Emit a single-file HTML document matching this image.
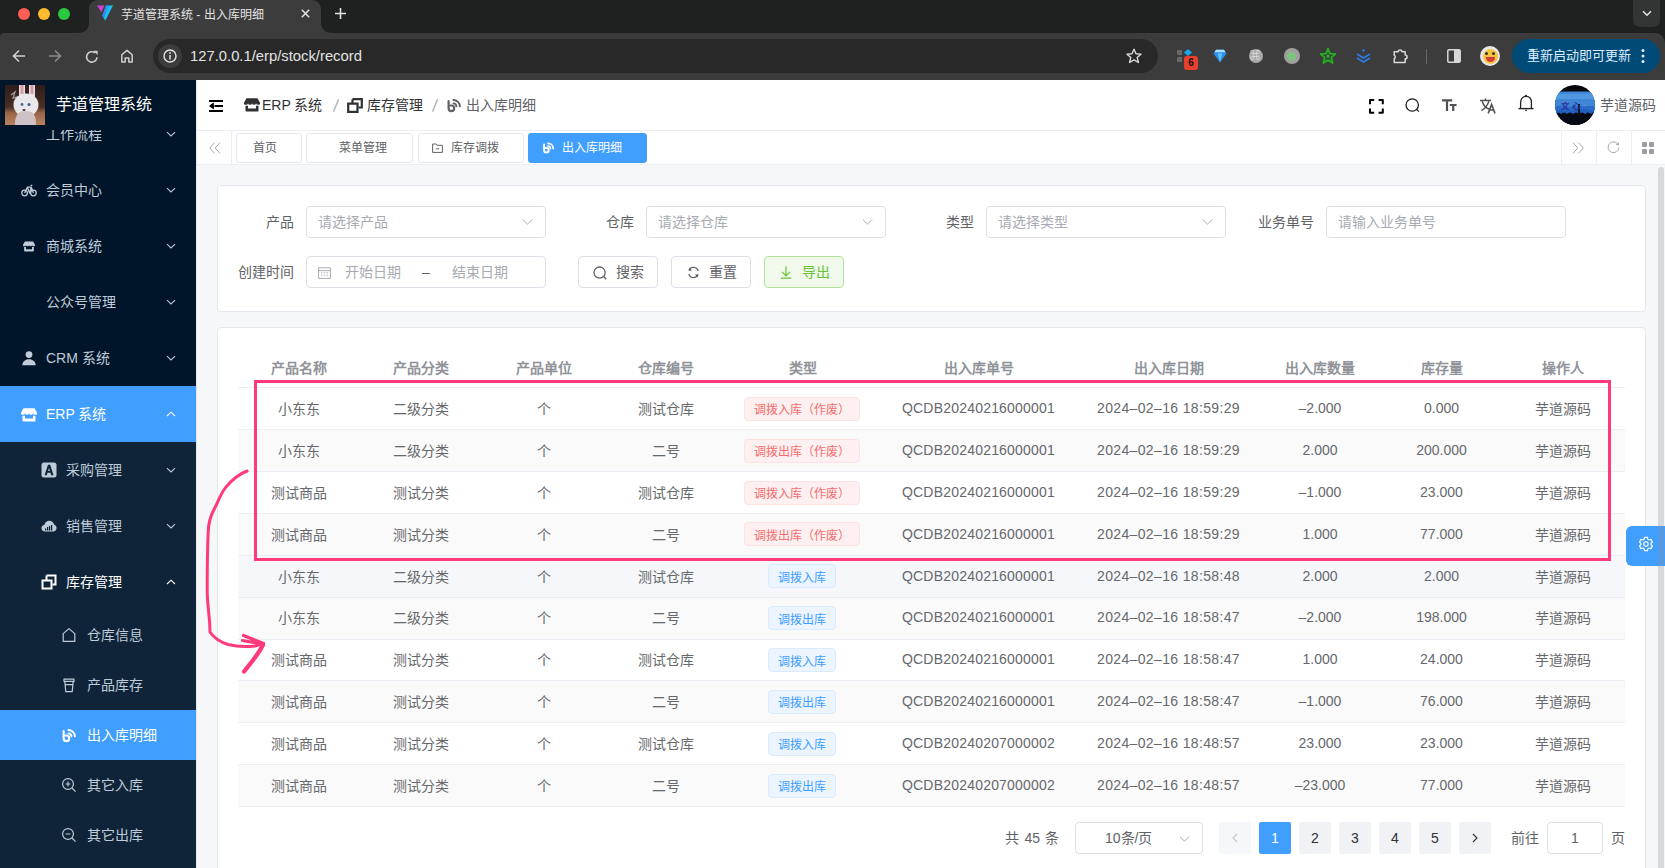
<!DOCTYPE html>
<html lang="zh-CN">
<head>
<meta charset="utf-8">
<style>
*{box-sizing:border-box;margin:0;padding:0}
html,body{width:1665px;height:868px;overflow:hidden;background:#f5f7f9;font-family:"Liberation Sans",sans-serif;font-size:14px;color:#606266}
.abs{position:absolute}
svg{display:block}
/* browser chrome */
#frame{position:absolute;left:0;top:0;width:1665px;height:44px;background:#1f2020}
#toolbar{position:absolute;left:0;top:33px;width:1665px;height:47px;background:#3c3c3c;border-radius:4px 10px 0 0}
.light{position:absolute;top:7.5px;width:12px;height:12px;border-radius:50%}
#tab{position:absolute;left:89px;top:0;width:231px;height:34px;background:#3c3c3c;border-radius:9px 9px 0 0}
#tabtitle{position:absolute;left:121px;top:5px;font-size:12px;font-weight:500;color:#e3e3e3;white-space:nowrap}
#omni{position:absolute;left:153px;top:39px;width:1005px;height:34px;background:#282828;border-radius:17px}
#url{position:absolute;left:190px;top:48px;font-size:14.8px;color:#e3e3e3;white-space:nowrap}
#update{position:absolute;left:1512px;top:39px;width:148px;height:34px;background:#004a77;border-radius:17px;color:#e8f2fb;font-size:13.5px}
/* sidebar */
#side{position:absolute;left:0;top:80px;width:196px;height:788px;background:#001529;overflow:hidden}
.mi{position:absolute;left:0;width:196px;height:56px;color:#bfcbd9;font-size:14px}
.mi .t{position:absolute;top:0;line-height:56px;white-space:nowrap}
.mi .ic{position:absolute;top:20px;width:16px;height:16px}
.mi .ch{position:absolute;left:166px;top:24px;width:10px;height:8px}
.sub{background:#0f2438}
.s3{height:50px}
.s3 .t{line-height:50px}
.s3 .ic{top:17px}
/* navbar */
#nav{position:absolute;left:196px;top:80px;width:1469px;height:51px;background:#fff;border-bottom:1px solid #ebeef5}
#tags{position:absolute;left:196px;top:131px;width:1469px;height:34px;background:#fff;border-bottom:1px solid #ebeef5}
.tag{position:absolute;top:1.5px;height:30px;border:1px solid #e4e7ed;border-radius:3px;font-size:12px;color:#606266;line-height:28px;white-space:nowrap}
/* cards */
.card{position:absolute;left:217px;width:1429px;background:#fff;border:1px solid #e4e7ed;border-radius:4px}
.lbl{position:absolute;width:68px;padding-right:12px;text-align:right;line-height:32px;color:#606266;font-size:14px;white-space:nowrap}
.inp{position:absolute;width:240px;height:32px;border:1px solid #dcdfe6;border-radius:4px;background:#fff}
.ph{position:absolute;left:11px;top:0;line-height:30px;color:#a8abb2;font-size:14px;white-space:nowrap}
.btn{position:absolute;top:256px;width:80px;height:32px;border:1px solid #dcdfe6;border-radius:4px;background:#fff;color:#606266;font-size:14px;line-height:30px}
.thr,.tr_{position:absolute;left:238px;width:1386.5px;border-bottom:1px solid #ebeef5}
.thr{height:40px;color:#909399;font-weight:bold}
.tr_{height:41.88px}
.td{position:absolute;top:0;height:100%;display:flex;align-items:center;justify-content:center;white-space:nowrap;color:#66686c;padding-bottom:1.4px}
.thr .td{padding-bottom:2px}
.thr .td{color:#909399}
.tg{display:inline-flex;align-items:center;height:24px;padding:0 9px;font-size:12px;border:1px solid;border-radius:4px;margin:1.5px 0 0 -1.5px}
.tr{background:#fef0f0;border-color:#fde2e2;color:#f56c6c}
.tb{background:#ecf5ff;border-color:#d9ecff;color:#409eff}
.pg{position:absolute;top:822px;width:32px;height:32px;border-radius:2px;background:#f0f2f5;color:#303133;text-align:center;line-height:32px;font-size:14px}
</style>
</head>
<body>
<!-- ========== BROWSER CHROME ========== -->
<div id="frame"></div>
<div id="toolbar"></div>
<div class="light" style="left:18px;background:#ff5f57"></div>
<div class="light" style="left:38px;background:#febc2e"></div>
<div class="light" style="left:58px;background:#28c840"></div>
<div id="omni"></div>
<div id="url">127.0.0.1/erp/stock/record</div>
<div id="update"></div>
<div id="chrome">
<svg class="abs" style="left:77px;top:0" width="256" height="34" viewBox="0 0 256 34"><path d="M0 33 C7 33 12 30 12 22 V9 C12 4 16 0 21 0 H235 C240 0 244 4 244 9 V22 C244 30 249 33 256 33 V34 H0z" fill="#3c3c3c"/></svg>
<svg class="abs" style="left:97px;top:4.5px" width="16" height="16" viewBox="0 0 16 16"><path d="M0 .6 H7.4 L4.4 7.2z" fill="#cf3fd0"/><path d="M9 .6 H16 L8.2 15.8 L5.4 10.8z" fill="#18c0f5"/><path d="M5.4 10.8 L9 .6 H11.2 L7 13.2z" fill="#3a86f0"/></svg>
<svg class="abs" style="left:300.5px;top:8.5px" width="9" height="9" viewBox="0 0 9 9"><path d="M.8 .8 L8.2 8.2 M8.2 .8 L.8 8.2" stroke="#e3e3e3" stroke-width="1.5"/></svg>
<svg class="abs" style="left:335px;top:7.5px" width="11" height="11" viewBox="0 0 11 11"><path d="M5.5 0 V11 M0 5.5 H11" stroke="#e3e3e3" stroke-width="1.6"/></svg>
<div class="abs" style="left:1633px;top:0;width:27px;height:26.5px;background:#333434;border-radius:0 0 7px 7px"></div>
<svg class="abs" style="left:1641.5px;top:10px" width="10" height="7" viewBox="0 0 10 7"><path d="M1 1.2 L5 5.2 L9 1.2" fill="none" stroke="#e3e3e3" stroke-width="1.6"/></svg>
<svg class="abs" style="left:12px;top:49px" width="14" height="14" viewBox="0 0 14 14"><path d="M13 7 H1.8 M7 1.5 L1.5 7 L7 12.5" fill="none" stroke="#d0d0d0" stroke-width="1.6"/></svg>
<svg class="abs" style="left:48px;top:49px" width="14" height="14" viewBox="0 0 14 14"><path d="M1 7 H12.2 M7 1.5 L12.5 7 L7 12.5" fill="none" stroke="#8a8a8a" stroke-width="1.6"/></svg>
<svg class="abs" style="left:84.5px;top:49.5px" width="14" height="14" viewBox="0 0 14 14"><path d="M12 7.2 A5.2 5.2 0 1 1 10.2 3" fill="none" stroke="#d0d0d0" stroke-width="1.6"/><path d="M8.4 .8 H12.6 V5 z" fill="#d0d0d0"/></svg>
<svg class="abs" style="left:120px;top:49px" width="14" height="14" viewBox="0 0 14 14"><path d="M1.8 13 V5.8 L7 1.4 L12.2 5.8 V13 H8.8 V9 H5.2 V13z" fill="none" stroke="#d0d0d0" stroke-width="1.5" stroke-linejoin="round"/></svg>
<div class="abs" style="left:158px;top:44px;width:24px;height:24px;border-radius:50%;background:#3c3c3c"></div>
<svg class="abs" style="left:163px;top:49px" width="14" height="14" viewBox="0 0 14 14"><circle cx="7" cy="7" r="6" fill="none" stroke="#e3e3e3" stroke-width="1.4"/><path d="M7 6 V10.5" stroke="#e3e3e3" stroke-width="1.5"/><circle cx="7" cy="4" r=".9" fill="#e3e3e3"/></svg>
<svg class="abs" style="left:1125.5px;top:48px" width="16" height="16" viewBox="0 0 16 16"><path d="M8 1.2 L10 5.8 L15 6.2 L11.2 9.5 L12.4 14.5 L8 11.8 L3.6 14.5 L4.8 9.5 L1 6.2 L6 5.8z" fill="none" stroke="#d8d8d8" stroke-width="1.4" stroke-linejoin="round"/></svg>
<div class="abs" style="left:1177px;top:49.5px;width:5px;height:5px;border-radius:1px;background:#6a6a6a"></div>
<div class="abs" style="left:1177px;top:57px;width:5px;height:5px;border-radius:1px;background:#6a6a6a"></div>
<svg class="abs" style="left:1183.5px;top:48.5px" width="8" height="7" viewBox="0 0 8 7"><path d="M4 0 L8 3.5 L4 7 L0 3.5z" fill="#1ba6f0"/></svg>
<div class="abs" style="left:1184px;top:56px;width:14px;height:14px;border-radius:3px;background:#e8402f;color:#111;font-size:10px;font-weight:bold;text-align:center;line-height:14px">6</div>
<svg class="abs" style="left:1212.5px;top:48.5px" width="14" height="14" viewBox="0 0 14 14"><path d="M3 .8 H11 L13.6 4.4 L7 13.4 L.4 4.4z" fill="#2a8ce8"/><path d="M3 .8 H11 L12.4 3.2 H1.6z" fill="#a8e4ff"/><path d="M4.6 4.4 L7 13.4 L9.4 4.4z" fill="#5fc3ff"/></svg>
<div class="abs" style="left:1248.5px;top:49px;width:14px;height:14px;border-radius:50%;background:#a9a9a9"></div>
<span class="abs" style="left:1250px;top:49px;font-size:10px;color:#eee;line-height:14px">⌘</span>
<div class="abs" style="left:1283.5px;top:48px;width:16px;height:16px;border-radius:50%;background:#a0a0a0"></div>
<div class="abs" style="left:1287px;top:51.5px;width:9px;height:9px;border-radius:50%;background:#7dc47d"></div>
<svg class="abs" style="left:1320px;top:48px" width="16" height="16" viewBox="0 0 16 16"><path d="M8 .6 L10 5.6 L15.4 6 L11.2 9.6 L12.6 15 L8 12 L3.4 15 L4.8 9.6 L.6 6 L6 5.6z" fill="none" stroke="#22b022" stroke-width="1.8" stroke-linejoin="round"/><circle cx="8" cy="8.2" r="1.6" fill="#22b022"/></svg>
<svg class="abs" style="left:1356px;top:49px" width="15" height="14" viewBox="0 0 15 14"><circle cx="7.5" cy="1.5" r="1.3" fill="#2e7be6"/><path d="M1 5 L7.5 9 L14 5 M1 9 L7.5 13 L14 9" fill="none" stroke="#2e7be6" stroke-width="1.6"/></svg>
<svg class="abs" style="left:1392px;top:48px" width="16" height="16" viewBox="0 0 16 16"><path d="M2.2 3.8 H6.2 A1.9 1.9 0 0 1 10 3.8 H13.2 V7 A1.9 1.9 0 0 1 13.2 10.8 V14.4 H2.2 V10.6 A1.9 1.9 0 0 0 2.2 7.2z" fill="none" stroke="#d8d8d8" stroke-width="1.5" stroke-linejoin="round"/></svg>
<div class="abs" style="left:1426px;top:49px;width:1px;height:15px;background:#6a6a6a"></div>
<svg class="abs" style="left:1446.5px;top:49px" width="14" height="14" viewBox="0 0 14 14"><rect x=".8" y=".8" width="12.4" height="12.4" rx="1.2" fill="none" stroke="#d8d8d8" stroke-width="1.5"/><rect x="7" y="1" width="6" height="12" fill="#d8d8d8"/></svg>
<div class="abs" style="left:1480px;top:46px;width:20px;height:20px;border-radius:50%;background:#e8e8e8"></div>
<div class="abs" style="left:1482.5px;top:48.5px;width:15px;height:15px;border-radius:50%;background:#f5c542"></div>
<div class="abs" style="left:1485.5px;top:57px;width:9px;height:5px;border-radius:0 0 5px 5px;background:#d83a3a"></div>
<div class="abs" style="left:1485px;top:51.5px;width:3px;height:3px;border-radius:50%;background:#333"></div>
<div class="abs" style="left:1491.5px;top:51.5px;width:3px;height:3px;border-radius:50%;background:#333"></div>
<span class="abs" style="left:1527px;top:39px;line-height:34px;font-size:13px;color:#dbeeff;white-space:nowrap">重新启动即可更新</span>
<svg class="abs" style="left:1641px;top:48px" width="4" height="16" viewBox="0 0 4 16"><circle cx="2" cy="2.5" r="1.5" fill="#dbeeff"/><circle cx="2" cy="8" r="1.5" fill="#dbeeff"/><circle cx="2" cy="13.5" r="1.5" fill="#dbeeff"/></svg>
</div>

<div id="tabtitle">芋道管理系统 - 出入库明细</div>
<!-- ========== SIDEBAR ========== -->
<div id="side">
<div class="mi" style="top:26px"><span class="t" style="left:46px">工作流程</span><svg class="ch" viewBox="0 0 10 8"><path d="M1 2.2 L5 6 L9 2.2" fill="none" stroke="#bfcbd9" stroke-width="1.1"/></svg></div>
<div class="mi" style="top:82px"><svg class="ic" style="left:21px" viewBox="0 0 16 16"><circle cx="3.6" cy="11" r="2.8" fill="none" stroke="#bfcbd9" stroke-width="1.3"/><circle cx="12.4" cy="11" r="2.8" fill="none" stroke="#bfcbd9" stroke-width="1.3"/><path d="M3.6 11 L6.3 5.2 L10.3 5.2 L12.4 11 M6.3 5.2 L8.6 11 L10.3 5.2 M9.6 3.3 L11.3 3.3" fill="none" stroke="#bfcbd9" stroke-width="1.3" stroke-linejoin="round"/></svg><span class="t" style="left:46px">会员中心</span><svg class="ch" viewBox="0 0 10 8"><path d="M1 2.2 L5 6 L9 2.2" fill="none" stroke="#bfcbd9" stroke-width="1.1"/></svg></div>
<div class="mi" style="top:138px"><svg class="ic" style="left:23px;top:21px;top:22.5px;width:12px;height:11px" viewBox="0 0 16 14" width="16" height="14"><path d="M2.5 .2 H13.5 L16.2 5 Q16.2 6.8 14.2 6.8 Q12.2 6.8 12.1 5.3 Q12 6.8 10.1 6.8 Q8.1 6.8 8.1 5.3 Q8 6.8 6.1 6.8 Q4.1 6.8 4 5.3 Q4 6.8 2 6.8 Q-.2 6.8 -.2 5z M1.5 7.8 H4 V10.6 H12 V7.8 H14.5 V12.4 Q14.5 13.6 13.3 13.6 H2.7 Q1.5 13.6 1.5 12.4z" fill="#bfcbd9"/></svg><span class="t" style="left:46px">商城系统</span><svg class="ch" viewBox="0 0 10 8"><path d="M1 2.2 L5 6 L9 2.2" fill="none" stroke="#bfcbd9" stroke-width="1.1"/></svg></div>
<div class="mi" style="top:194px"><span class="t" style="left:46px">公众号管理</span><svg class="ch" viewBox="0 0 10 8"><path d="M1 2.2 L5 6 L9 2.2" fill="none" stroke="#bfcbd9" stroke-width="1.1"/></svg></div>
<div class="mi" style="top:250px"><svg class="ic" style="left:21px" viewBox="0 0 16 16"><circle cx="8" cy="4.6" r="3.4" fill="#bfcbd9"/><path d="M1.3 15.2c0-3.6 2.9-6 6.7-6s6.7 2.4 6.7 6z" fill="#bfcbd9"/></svg><span class="t" style="left:46px">CRM 系统</span><svg class="ch" viewBox="0 0 10 8"><path d="M1 2.2 L5 6 L9 2.2" fill="none" stroke="#bfcbd9" stroke-width="1.1"/></svg></div>
<div class="sub" style="position:absolute;left:0;top:362px;width:196px;height:430px"></div>
<div class="mi" style="top:306px;background:#409eff;color:#fff"><svg class="ic" style="left:21px;top:21px" viewBox="0 0 16 14" width="16" height="14"><path d="M2.5 .2 H13.5 L16.2 5 Q16.2 6.8 14.2 6.8 Q12.2 6.8 12.1 5.3 Q12 6.8 10.1 6.8 Q8.1 6.8 8.1 5.3 Q8 6.8 6.1 6.8 Q4.1 6.8 4 5.3 Q4 6.8 2 6.8 Q-.2 6.8 -.2 5z M1.5 7.8 H4 V10.6 H12 V7.8 H14.5 V12.4 Q14.5 13.6 13.3 13.6 H2.7 Q1.5 13.6 1.5 12.4z" fill="#fff"/></svg><span class="t" style="left:46px">ERP 系统</span><svg class="ch" viewBox="0 0 10 8"><path d="M1 6 L5 2.2 L9 6" fill="none" stroke="#fff" stroke-width="1.1"/></svg></div>
<div class="mi" style="top:362px"><svg class="ic" style="left:41px" viewBox="0 0 16 16"><rect x=".5" y=".5" width="15" height="15" rx="2.5" fill="#bfcbd9"/><path d="M3.6 13.2 L7 2.8 H9.2 L12.5 13.2 H10.2 L9.5 10.8 H6.5 L5.8 13.2z M7.1 8.9 H8.9 L8 5.9z" fill="#0f2438"/></svg><span class="t" style="left:66px">采购管理</span><svg class="ch" viewBox="0 0 10 8"><path d="M1 2.2 L5 6 L9 2.2" fill="none" stroke="#bfcbd9" stroke-width="1.1"/></svg></div>
<div class="mi" style="top:418px"><svg class="ic" style="left:41px" viewBox="0 0 16 16"><path d="M4 13.5C1.9 13.5.5 12.1.5 10.3c0-1.7 1.2-3 2.8-3.2C3.8 4.6 5.8 2.8 8.3 2.8c2.4 0 4.4 1.7 4.9 4 1.5.4 2.4 1.7 2.4 3.2 0 1.9-1.5 3.5-3.5 3.5z" fill="#bfcbd9"/><path d="M4.6 12.4v-2M6.6 12.4V9M8.6 12.4V8M10.6 12.4V7" stroke="#0f2438" stroke-width="1.3"/></svg><span class="t" style="left:66px">销售管理</span><svg class="ch" viewBox="0 0 10 8"><path d="M1 2.2 L5 6 L9 2.2" fill="none" stroke="#bfcbd9" stroke-width="1.1"/></svg></div>
<div class="mi" style="top:474px;color:#fff"><svg class="ic" style="left:41px" viewBox="0 0 16 16"><path d="M5.5 1.5h9v9h-3" fill="none" stroke="#fff" stroke-width="2"/><path d="M1.5 6.5h9v8h-9z M5.5 6.5v-5" fill="none" stroke="#fff" stroke-width="2"/></svg><span class="t" style="left:66px">库存管理</span><svg class="ch" viewBox="0 0 10 8"><path d="M1 6 L5 2.2 L9 6" fill="none" stroke="#fff" stroke-width="1.1"/></svg></div>
<div class="mi s3" style="top:530px"><svg class="ic" style="left:61px" viewBox="0 0 16 16"><path d="M2.2 6.6 L8 1.6 L13.8 6.6 V14.4 H2.2z" fill="none" stroke="#bfcbd9" stroke-width="1.2" stroke-linejoin="round"/></svg><span class="t" style="left:87px">仓库信息</span></div>
<div class="mi s3" style="top:580px"><svg class="ic" style="left:61px" viewBox="0 0 16 16"><path d="M3 2.2h10v2.2H3z M3.8 4.4 L4.8 14.6 H11.2 L12.2 4.4 M4.2 7.6 H11.8" fill="none" stroke="#bfcbd9" stroke-width="1.2" stroke-linejoin="round"/></svg><span class="t" style="left:87px">产品库存</span></div>
<div class="mi s3" style="top:630px;background:#409eff;color:#fff"><svg class="ic" style="left:61px" viewBox="0 0 16 16"><path d="M2.6 4.2 V11.3 A2.8 2.8 0 1 0 5.4 8.5 H4.6" fill="none" stroke="#fff" stroke-width="2.2" stroke-linecap="round"/><path d="M7.4 6.4 A3.2 3.2 0 0 1 10.4 9.4 M7.4 3 A6.6 6.6 0 0 1 13.9 9.4" fill="none" stroke="#fff" stroke-width="1.9" stroke-linecap="round"/></svg><span class="t" style="left:87px">出入库明细</span></div>
<div class="mi s3" style="top:680px"><svg class="ic" style="left:61px" viewBox="0 0 16 16"><circle cx="7" cy="7" r="5.4" fill="none" stroke="#bfcbd9" stroke-width="1.2"/><path d="M11 11 L14.6 14.6 M4.6 7 H9.4 M7 4.6 V9.4" stroke="#bfcbd9" stroke-width="1.2"/></svg><span class="t" style="left:87px">其它入库</span></div>
<div class="mi s3" style="top:730px"><svg class="ic" style="left:61px" viewBox="0 0 16 16"><circle cx="7" cy="7" r="5.4" fill="none" stroke="#bfcbd9" stroke-width="1.2"/><path d="M11 11 L14.6 14.6 M4.6 7 H9.4" stroke="#bfcbd9" stroke-width="1.2"/></svg><span class="t" style="left:87px">其它出库</span></div>
<div style="position:absolute;left:0;top:0;width:196px;height:50px;background:#001529"><svg id="logo" style="position:absolute;left:5px;top:5px" width="40" height="40" viewBox="0 0 40 40"><defs><linearGradient id="lg1" x1="0" y1="0" x2="0" y2="1"><stop offset="0" stop-color="#2e1c18"/><stop offset=".55" stop-color="#4a2e26"/><stop offset=".7" stop-color="#9a6648"/><stop offset="1" stop-color="#b98462"/></linearGradient></defs><rect width="40" height="40" fill="url(#lg1)"/><path d="M6 10 L10 7 L8 13 L12 12 L9 17" fill="none" stroke="#9a9a9a" stroke-width="1.3"/><path d="M14 0 h6 v12 h-6z M24 0 h6 v12 h-6z" fill="#e6e2e4"/><path d="M15.5 0 h3 v9 h-3z M25.5 0 h3 v9 h-3z" fill="#d49aa8"/><ellipse cx="21" cy="20" rx="12.5" ry="11.5" fill="#e9e7ea"/><path d="M10 40 C10 30 13 26 21 26 C29 26 31 31 31 40z" fill="#cfc2c6"/><circle cx="17" cy="19.5" r="1.4" fill="#4a6a9a"/><circle cx="24" cy="19.5" r="1.5" fill="#3a5a90"/><ellipse cx="19" cy="25" rx="1.5" ry="1.1" fill="#3a2a2a"/></svg><span style="position:absolute;left:56px;top:0;line-height:50px;color:#fff;font-size:16px;font-weight:500;white-space:nowrap">芋道管理系统</span></div>
</div>

<!-- ========== NAVBAR ========== -->
<div id="nav">
<svg class="abs" style="left:12.5px;top:19.5px" width="14" height="12" viewBox="0 0 14 12"><path d="M0 1h14M6 6h8M0 11h14" stroke="#000" stroke-width="2"/><path d="M4.2 3.6 L1 6 L4.2 8.4z M4 6h3" fill="#000" stroke="#000" stroke-width="1.2"/></svg>
<svg class="abs" style="left:48px;top:18px" width="16" height="14" viewBox="0 0 16 14"><path d="M2.5 .2 H13.5 L16.2 5 Q16.2 6.8 14.2 6.8 Q12.2 6.8 12.1 5.3 Q12 6.8 10.1 6.8 Q8.1 6.8 8.1 5.3 Q8 6.8 6.1 6.8 Q4.1 6.8 4 5.3 Q4 6.8 2 6.8 Q-.2 6.8 -.2 5z M1.5 7.8 H4 V10.6 H12 V7.8 H14.5 V12.4 Q14.5 13.6 13.3 13.6 H2.7 Q1.5 13.6 1.5 12.4z" fill="#303133"/></svg>
<span class="abs" style="left:66px;top:0;line-height:50px;font-weight:500;color:#303133;white-space:nowrap">ERP 系统</span>
<svg class="abs" style="left:136px;top:18px" width="8" height="15" viewBox="0 0 8 15"><path d="M6.6 1 L1.6 13.6" stroke="#b4b7bd" stroke-width="1.5"/></svg>
<svg class="abs" style="left:151px;top:17.5px" width="16" height="15" viewBox="0 0 16 15"><path d="M5.5 1.2h9.3v8.3h-3.4" fill="none" stroke="#303133" stroke-width="2.2"/><path d="M1.2 5.6h9.3v8.3H1.2z M5.5 5.6V1.2" fill="none" stroke="#303133" stroke-width="2.2"/></svg>
<span class="abs" style="left:171px;top:0;line-height:50px;font-weight:500;color:#303133;white-space:nowrap">库存管理</span>
<svg class="abs" style="left:235px;top:18px" width="8" height="15" viewBox="0 0 8 15"><path d="M6.6 1 L1.6 13.6" stroke="#b4b7bd" stroke-width="1.5"/></svg>
<svg class="abs" style="left:250px;top:17px" width="16" height="16" viewBox="0 0 16 16"><path d="M2.6 4.2 V11.3 A2.8 2.8 0 1 0 5.4 8.5 H4.6" fill="none" stroke="#606266" stroke-width="2.2" stroke-linecap="round"/><path d="M7.4 6.4 A3.2 3.2 0 0 1 10.4 9.4 M7.4 3 A6.6 6.6 0 0 1 13.9 9.4" fill="none" stroke="#606266" stroke-width="1.9" stroke-linecap="round"/></svg>
<span class="abs" style="left:270px;top:0;line-height:50px;color:#606266;white-space:nowrap">出入库明细</span>
<!-- right tools -->
<svg class="abs" style="left:1172.5px;top:18.5px" width="15" height="15" viewBox="0 0 15 15"><path d="M1 5.2 V1 H5.2 M9.6 1 H13.8 V5.2 M13.8 9.6 V13.8 H9.6 M5.2 13.8 H1 V9.6" fill="none" stroke="#000" stroke-width="2" stroke-linejoin="round"/></svg>
<svg class="abs" style="left:1209px;top:18px" width="15" height="15" viewBox="0 0 15 15"><circle cx="7.2" cy="7" r="6.2" fill="none" stroke="#1a1a1a" stroke-width="1.25"/><path d="M11.6 11.4 L13.8 13.6" stroke="#1a1a1a" stroke-width="1.3"/></svg>
<svg class="abs" style="left:1246px;top:19px" width="15" height="12" viewBox="0 0 15 12"><path d="M0 1.3 H10.2 M5 1.3 V12 M7.8 6 H14.6 M11.2 6 V12" fill="none" stroke="#505255" stroke-width="2.2"/></svg>
<svg class="abs" style="left:1283.5px;top:17.5px" width="16" height="16" viewBox="0 0 16 16"><path d="M5.5 .5 V2.2 M0 2.6 H11 M2.2 3.4 C3.6 7.4 6 10 9.2 11 M8.8 3.4 C7.6 7.6 5 10.6 1.4 12.6" fill="none" stroke="#505255" stroke-width="1.5"/><path d="M8.2 15.4 L11.6 6.4 L15 15.4 M9.6 12 H13.6" fill="none" stroke="#505255" stroke-width="1.6"/></svg>
<svg class="abs" style="left:1321.5px;top:14px" width="16" height="18" viewBox="0 0 16 18"><path d="M2.6 14 V8.6 C2.6 4.8 4.8 2.4 8 2.4 S13.4 4.8 13.4 8.6 V14" fill="none" stroke="#222" stroke-width="1.3"/><path d="M.5 14.6 H15.5" stroke="#222" stroke-width="1.4"/><circle cx="8" cy="1.8" r="1.1" fill="#222"/><circle cx="8" cy="16.4" r=".8" fill="#222"/></svg>
<svg id="avatar" class="abs" style="left:1359px;top:5px" width="40" height="40" viewBox="0 0 40 40"><defs><clipPath id="avc"><circle cx="20" cy="20" r="20"/></clipPath></defs><g clip-path="url(#avc)"><rect width="40" height="40" fill="#05070d"/><rect y="6.5" width="40" height="24" fill="#3f86d6"/><rect y="9" width="40" height="5" fill="#5198e0"/><path d="M0 22 C8 19 14 23 22 21 C30 19 34 22 40 21 V30 H0z" fill="#2a6cc8"/><path d="M0 26 C8 24 16 27 24 25 C32 23 36 26 40 25 V31 H0z" fill="#1f5fc0"/><path d="M0 30 Q3 26 6 29 Q9 26 12 29 Q15 26 18 29 Q21 26 24 29 Q27 26 30 29 Q33 26 36 29 Q39 26 40 28 V40 H0z" fill="#070a12"/><rect x="23" y="19" width="2" height="11" fill="#0a1020"/><text x="6" y="24" font-size="8.5" font-weight="bold" fill="#2a2f9a" font-family="Liberation Sans,sans-serif">文 心</text><text x="26.5" y="21.5" font-size="5" fill="#8fb0d8" font-family="Liberation Sans,sans-serif">一</text></g></svg>
<span class="abs" style="left:1404px;top:0;line-height:50px;color:#606266;white-space:nowrap">芋道源码</span>
</div>
<div id="tags">
<div class="abs" style="left:0;top:0;width:36px;height:33px;border-right:1px solid #ebeef5"></div>
<svg class="abs" style="left:12.5px;top:10.5px" width="12" height="12" viewBox="0 0 12 12"><path d="M5.6 .6 L.8 6 L5.6 11.4 M11 .6 L6.2 6 L11 11.4" fill="none" stroke="#a8abb2" stroke-width="1"/></svg>
<div class="tag" style="left:40px;width:66px;padding-left:16px">首页</div>
<div class="tag" style="left:110px;width:107px;padding-left:32px">菜单管理</div>
<div class="tag" style="left:221.5px;width:106.5px">
<svg class="abs" style="left:13px;top:9px" width="11" height="10" viewBox="0 0 11 10"><path d="M.6 1h3.6l1 1.3h5.2v7.1H.6z M3.8 5.8h3.4" fill="none" stroke="#606266" stroke-width="1"/></svg>
<span class="abs" style="left:32px;top:0">库存调拨</span></div>
<div class="tag" style="left:332px;width:119px;background:#409eff;border-color:#409eff;color:#fff">
<svg class="abs" style="left:12.5px;top:7.5px" width="13" height="13" viewBox="0 0 16 16"><path d="M2.6 4.2 V11.3 A2.8 2.8 0 1 0 5.4 8.5 H4.6" fill="none" stroke="#fff" stroke-width="2.4" stroke-linecap="round"/><path d="M7.4 6.4 A3.2 3.2 0 0 1 10.4 9.4 M7.4 3 A6.6 6.6 0 0 1 13.9 9.4" fill="none" stroke="#fff" stroke-width="2.1" stroke-linecap="round"/></svg>
<span class="abs" style="left:33px;top:0">出入库明细</span></div>
<div class="abs" style="left:1364.5px;top:0;width:35px;height:33px;border-left:1px solid #ebeef5"></div>
<div class="abs" style="left:1400px;top:0;width:35px;height:33px;border-left:1px solid #ebeef5"></div>
<div class="abs" style="left:1434.5px;top:0;width:35px;height:33px;border-left:1px solid #ebeef5"></div>
<svg class="abs" style="left:1376px;top:10.5px" width="12" height="12" viewBox="0 0 12 12"><path d="M1 .6 L5.8 6 L1 11.4 M6.4 .6 L11.2 6 L6.4 11.4" fill="none" stroke="#a8abb2" stroke-width="1"/></svg>
<svg class="abs" style="left:1410.5px;top:10px" width="13" height="13" viewBox="0 0 13 13"><path d="M11.2 3.6 A5.4 5.4 0 1 0 11.9 6.6" fill="none" stroke="#a8abb2" stroke-width="1"/><path d="M8.6 3.9 L12 4.3 L11.9 .9z" fill="#a8abb2"/></svg>
<svg class="abs" style="left:1446px;top:10.5px" width="12" height="12" viewBox="0 0 12 12"><rect x="0" y="0" width="5" height="5" rx=".8" fill="#9a9da3"/><rect x="7" y="0" width="5" height="5" rx=".8" fill="#9a9da3"/><rect x="0" y="7" width="5" height="5" rx=".8" fill="#9a9da3"/><rect x="7" y="7" width="5" height="5" rx=".8" fill="#9a9da3"/></svg>
</div>

<div class="abs" style="left:196px;top:80px;width:1px;height:788px;background:#e6e8eb"></div>
<!-- ========== SEARCH CARD ========== -->
<div class="card" style="top:185px;height:127px"></div>

<div id="search">
<div class="lbl" style="left:238px;top:206px">产品</div><div class="inp" style="left:306px;top:206px"><span class="ph">请选择产品</span><svg class="abs" style="right:12px;top:11px" width="11" height="8" viewBox="0 0 11 8"><path d="M.8 1.5 L5.5 6.2 L10.2 1.5" fill="none" stroke="#a8abb2" stroke-width="1"/></svg></div>
<div class="lbl" style="left:578px;top:206px">仓库</div><div class="inp" style="left:646px;top:206px"><span class="ph">请选择仓库</span><svg class="abs" style="right:12px;top:11px" width="11" height="8" viewBox="0 0 11 8"><path d="M.8 1.5 L5.5 6.2 L10.2 1.5" fill="none" stroke="#a8abb2" stroke-width="1"/></svg></div>
<div class="lbl" style="left:918px;top:206px">类型</div><div class="inp" style="left:986px;top:206px"><span class="ph">请选择类型</span><svg class="abs" style="right:12px;top:11px" width="11" height="8" viewBox="0 0 11 8"><path d="M.8 1.5 L5.5 6.2 L10.2 1.5" fill="none" stroke="#a8abb2" stroke-width="1"/></svg></div>
<div class="lbl" style="left:1258px;top:206px">业务单号</div><div class="inp" style="left:1326px;top:206px"><span class="ph">请输入业务单号</span></div>
<div class="lbl" style="left:238px;top:256px">创建时间</div><div class="inp" style="left:306px;top:256px"><svg class="abs" style="left:10.5px;top:9px" width="13" height="13" viewBox="0 0 13 13"><path d="M.6 1.8h11.8v10.6H.6z M.6 4.6h11.8" fill="none" stroke="#a8abb2" stroke-width="1"/><path d="M3 6.8h1.4M5.8 6.8h1.4M8.6 6.8h1.4M3 9.2h1.4M5.8 9.2h1.4M8.6 9.2h1.4" stroke="#a8abb2" stroke-width="1"/></svg><span class="ph" style="left:38px">开始日期</span><span class="abs" style="left:115px;top:0;line-height:30px;color:#606266">–</span><span class="ph" style="left:145px">结束日期</span></div>
<div class="btn" style="left:578px"><svg class="abs" style="left:13.5px;top:8.5px" width="14" height="14" viewBox="0 0 14 14"><circle cx="6.6" cy="6.6" r="5.6" fill="none" stroke="#606266" stroke-width="1.3"/><path d="M10.6 10.6 L13.3 13.3" stroke="#606266" stroke-width="1.4"/></svg><span class="abs" style="left:37px;top:0;font-weight:500">搜索</span></div>
<div class="btn" style="left:671px"><svg class="abs" style="left:14.5px;top:9px" width="13" height="13" viewBox="0 0 13 13"><path d="M11.2 5.2 A4.9 4.9 0 0 0 2 4.2 M1.8 7.8 A4.9 4.9 0 0 0 11 8.8" fill="none" stroke="#606266" stroke-width="1.2"/><path d="M2.6 1.4 L1.6 4.8 L5 4.6z M10.4 11.6 L11.4 8.2 L8 8.4z" fill="#606266"/></svg><span class="abs" style="left:37px;top:0;font-weight:500">重置</span></div>
<div class="btn" style="left:764px;background:#f0f9eb;border-color:#b3e19d;color:#67c23a"><svg class="abs" style="left:15px;top:9px" width="12" height="13" viewBox="0 0 12 13"><path d="M6 .5v9M2 5.8 L6 9.8 L10 5.8 M.8 12.2h10.4" fill="none" stroke="#67c23a" stroke-width="1.2"/></svg><span class="abs" style="left:37px;top:0;font-weight:500">导出</span></div>
</div>
<!-- ========== TABLE CARD ========== -->
<div class="card" style="top:327px;height:560px"></div>

<div id="table">
<div class="thr" style="top:348.3px"><div class="td" style="left:0px;width:122px">产品名称</div><div class="td" style="left:122px;width:122px">产品分类</div><div class="td" style="left:244px;width:123px">产品单位</div><div class="td" style="left:367px;width:122px">仓库编号</div><div class="td" style="left:489px;width:152px">类型</div><div class="td" style="left:641px;width:199px">出入库单号</div><div class="td" style="left:840px;width:181px">出入库日期</div><div class="td" style="left:1021px;width:122px">出入库数量</div><div class="td" style="left:1143px;width:121px">库存量</div><div class="td" style="left:1264px;width:122.5px">操作人</div></div>
<div class="tr_" style="top:388.30px;background:#fff"><div class="td" style="left:0px;width:122px">小东东</div><div class="td" style="left:122px;width:122px">二级分类</div><div class="td" style="left:244px;width:123px">个</div><div class="td" style="left:367px;width:122px">测试仓库</div><div class="td" style="left:489px;width:152px"><span class="tg tr">调拨入库（作废）</span></div><div class="td" style="left:641px;width:199px;letter-spacing:.2px">QCDB20240216000001</div><div class="td" style="left:840px;width:181px;letter-spacing:.35px">2024–02–16 18:59:29</div><div class="td" style="left:1021px;width:122px">–2.000</div><div class="td" style="left:1143px;width:121px">0.000</div><div class="td" style="left:1264px;width:122.5px">芋道源码</div></div>
<div class="tr_" style="top:430.18px;background:#fafafa"><div class="td" style="left:0px;width:122px">小东东</div><div class="td" style="left:122px;width:122px">二级分类</div><div class="td" style="left:244px;width:123px">个</div><div class="td" style="left:367px;width:122px">二号</div><div class="td" style="left:489px;width:152px"><span class="tg tr">调拨出库（作废）</span></div><div class="td" style="left:641px;width:199px;letter-spacing:.2px">QCDB20240216000001</div><div class="td" style="left:840px;width:181px;letter-spacing:.35px">2024–02–16 18:59:29</div><div class="td" style="left:1021px;width:122px">2.000</div><div class="td" style="left:1143px;width:121px">200.000</div><div class="td" style="left:1264px;width:122.5px">芋道源码</div></div>
<div class="tr_" style="top:472.06px;background:#fff"><div class="td" style="left:0px;width:122px">测试商品</div><div class="td" style="left:122px;width:122px">测试分类</div><div class="td" style="left:244px;width:123px">个</div><div class="td" style="left:367px;width:122px">测试仓库</div><div class="td" style="left:489px;width:152px"><span class="tg tr">调拨入库（作废）</span></div><div class="td" style="left:641px;width:199px;letter-spacing:.2px">QCDB20240216000001</div><div class="td" style="left:840px;width:181px;letter-spacing:.35px">2024–02–16 18:59:29</div><div class="td" style="left:1021px;width:122px">–1.000</div><div class="td" style="left:1143px;width:121px">23.000</div><div class="td" style="left:1264px;width:122.5px">芋道源码</div></div>
<div class="tr_" style="top:513.94px;background:#fafafa"><div class="td" style="left:0px;width:122px">测试商品</div><div class="td" style="left:122px;width:122px">测试分类</div><div class="td" style="left:244px;width:123px">个</div><div class="td" style="left:367px;width:122px">二号</div><div class="td" style="left:489px;width:152px"><span class="tg tr">调拨出库（作废）</span></div><div class="td" style="left:641px;width:199px;letter-spacing:.2px">QCDB20240216000001</div><div class="td" style="left:840px;width:181px;letter-spacing:.35px">2024–02–16 18:59:29</div><div class="td" style="left:1021px;width:122px">1.000</div><div class="td" style="left:1143px;width:121px">77.000</div><div class="td" style="left:1264px;width:122.5px">芋道源码</div></div>
<div class="tr_" style="top:555.82px;background:#f5f7fa"><div class="td" style="left:0px;width:122px">小东东</div><div class="td" style="left:122px;width:122px">二级分类</div><div class="td" style="left:244px;width:123px">个</div><div class="td" style="left:367px;width:122px">测试仓库</div><div class="td" style="left:489px;width:152px"><span class="tg tb">调拨入库</span></div><div class="td" style="left:641px;width:199px;letter-spacing:.2px">QCDB20240216000001</div><div class="td" style="left:840px;width:181px;letter-spacing:.35px">2024–02–16 18:58:48</div><div class="td" style="left:1021px;width:122px">2.000</div><div class="td" style="left:1143px;width:121px">2.000</div><div class="td" style="left:1264px;width:122.5px">芋道源码</div></div>
<div class="tr_" style="top:597.70px;background:#fafafa"><div class="td" style="left:0px;width:122px">小东东</div><div class="td" style="left:122px;width:122px">二级分类</div><div class="td" style="left:244px;width:123px">个</div><div class="td" style="left:367px;width:122px">二号</div><div class="td" style="left:489px;width:152px"><span class="tg tb">调拨出库</span></div><div class="td" style="left:641px;width:199px;letter-spacing:.2px">QCDB20240216000001</div><div class="td" style="left:840px;width:181px;letter-spacing:.35px">2024–02–16 18:58:47</div><div class="td" style="left:1021px;width:122px">–2.000</div><div class="td" style="left:1143px;width:121px">198.000</div><div class="td" style="left:1264px;width:122.5px">芋道源码</div></div>
<div class="tr_" style="top:639.58px;background:#fff"><div class="td" style="left:0px;width:122px">测试商品</div><div class="td" style="left:122px;width:122px">测试分类</div><div class="td" style="left:244px;width:123px">个</div><div class="td" style="left:367px;width:122px">测试仓库</div><div class="td" style="left:489px;width:152px"><span class="tg tb">调拨入库</span></div><div class="td" style="left:641px;width:199px;letter-spacing:.2px">QCDB20240216000001</div><div class="td" style="left:840px;width:181px;letter-spacing:.35px">2024–02–16 18:58:47</div><div class="td" style="left:1021px;width:122px">1.000</div><div class="td" style="left:1143px;width:121px">24.000</div><div class="td" style="left:1264px;width:122.5px">芋道源码</div></div>
<div class="tr_" style="top:681.46px;background:#fafafa"><div class="td" style="left:0px;width:122px">测试商品</div><div class="td" style="left:122px;width:122px">测试分类</div><div class="td" style="left:244px;width:123px">个</div><div class="td" style="left:367px;width:122px">二号</div><div class="td" style="left:489px;width:152px"><span class="tg tb">调拨出库</span></div><div class="td" style="left:641px;width:199px;letter-spacing:.2px">QCDB20240216000001</div><div class="td" style="left:840px;width:181px;letter-spacing:.35px">2024–02–16 18:58:47</div><div class="td" style="left:1021px;width:122px">–1.000</div><div class="td" style="left:1143px;width:121px">76.000</div><div class="td" style="left:1264px;width:122.5px">芋道源码</div></div>
<div class="tr_" style="top:723.34px;background:#fff"><div class="td" style="left:0px;width:122px">测试商品</div><div class="td" style="left:122px;width:122px">测试分类</div><div class="td" style="left:244px;width:123px">个</div><div class="td" style="left:367px;width:122px">测试仓库</div><div class="td" style="left:489px;width:152px"><span class="tg tb">调拨入库</span></div><div class="td" style="left:641px;width:199px;letter-spacing:.2px">QCDB20240207000002</div><div class="td" style="left:840px;width:181px;letter-spacing:.35px">2024–02–16 18:48:57</div><div class="td" style="left:1021px;width:122px">23.000</div><div class="td" style="left:1143px;width:121px">23.000</div><div class="td" style="left:1264px;width:122.5px">芋道源码</div></div>
<div class="tr_" style="top:765.22px;background:#fafafa"><div class="td" style="left:0px;width:122px">测试商品</div><div class="td" style="left:122px;width:122px">测试分类</div><div class="td" style="left:244px;width:123px">个</div><div class="td" style="left:367px;width:122px">二号</div><div class="td" style="left:489px;width:152px"><span class="tg tb">调拨出库</span></div><div class="td" style="left:641px;width:199px;letter-spacing:.2px">QCDB20240207000002</div><div class="td" style="left:840px;width:181px;letter-spacing:.35px">2024–02–16 18:48:57</div><div class="td" style="left:1021px;width:122px">–23.000</div><div class="td" style="left:1143px;width:121px">77.000</div><div class="td" style="left:1264px;width:122.5px">芋道源码</div></div>
<span class="abs" style="left:1005px;top:822px;line-height:32px;color:#606266;white-space:nowrap;word-spacing:1.5px">共 45 条</span>
<div class="inp" style="left:1075px;top:822px;width:128px"><span class="abs" style="left:29px;top:0;line-height:30px;color:#606266">10条/页</span><svg class="abs" style="left:102.5px;top:12px" width="11" height="8" viewBox="0 0 11 8"><path d="M.8 1.5 L5.5 6.2 L10.2 1.5" fill="none" stroke="#a8abb2" stroke-width="1"/></svg></div>
<div class="pg" style="left:1219px;background:#f5f7fa"><svg class="abs" style="left:12px;top:11px" width="8" height="10" viewBox="0 0 8 10"><path d="M6 1 L2 5 L6 9" fill="none" stroke="#c0c4cc" stroke-width="1.1"/></svg></div>
<div class="pg" style="left:1259px;background:#409eff;color:#fff">1</div>
<div class="pg" style="left:1299px;">2</div>
<div class="pg" style="left:1339px;">3</div>
<div class="pg" style="left:1379px;">4</div>
<div class="pg" style="left:1419px;">5</div>
<div class="pg" style="left:1459px"><svg class="abs" style="left:12px;top:11px" width="8" height="10" viewBox="0 0 8 10"><path d="M2 1 L6 5 L2 9" fill="none" stroke="#303133" stroke-width="1.1"/></svg></div>
<span class="abs" style="left:1511px;top:822px;line-height:32px;color:#606266">前往</span>
<div class="inp" style="left:1547px;top:822px;width:56px;text-align:center;line-height:30px;color:#606266">1</div>
<span class="abs" style="left:1611px;top:822px;line-height:32px;color:#606266">页</span>
</div>
<div id="misc">
<div class="abs" style="left:1626px;top:526px;width:45px;height:40px;border-radius:6px 0 0 6px;background:#409eff"><svg class="abs" style="left:11.5px;top:10px" width="16" height="16" viewBox="0 0 24 24"><circle cx="12" cy="12" r="3.3" fill="none" stroke="#fff" stroke-width="1.7"/><path d="M9.15 4.95 L9.71 2.06 L14.29 2.06 L14.85 4.95 L16.68 6.01 L19.46 5.04 L21.75 9.02 L19.53 10.94 L19.53 13.06 L21.75 14.98 L19.46 18.96 L16.68 17.99 L14.85 19.05 L14.29 21.94 L9.71 21.94 L9.15 19.05 L7.32 17.99 L4.54 18.96 L2.25 14.98 L4.47 13.06 L4.47 10.94 L2.25 9.02 L4.54 5.04 L7.32 6.01z" fill="none" stroke="#fff" stroke-width="1.7" stroke-linejoin="round"/></svg></div>
<div class="abs" style="left:1658px;top:167px;width:6px;height:720px;border-radius:3px;background:rgba(144,147,153,.3)"></div>
<svg class="abs" style="left:0;top:0" width="1665" height="868" viewBox="0 0 1665 868">
<rect x="255.5" y="381.5" width="1354" height="178" fill="none" stroke="#ff3a7a" stroke-width="3"/>
<path d="M247.1 471 C239 474 231 481 225.5 487.6 C221 493 218 502 214.4 508.8 C211 515 208.4 521 208.2 532 C207.6 545 207.2 560 207.2 590 C207.2 600 208.5 610 209.6 622 L210 632 C214 638 220 642 228 644.5 C236 646.5 246 647 255 646 L263.5 643.5" fill="none" stroke="#ff3a7a" stroke-width="3" stroke-linecap="round" stroke-linejoin="round"/>
<path d="M243.5 635.5 L263.5 643.5 M242.5 640.5 L262 644" fill="none" stroke="#ff3a7a" stroke-width="3.2" stroke-linecap="round"/>
<path d="M263 645 C258 655 250 664 244 671.5" fill="none" stroke="#ff3a7a" stroke-width="4.2" stroke-linecap="round"/>
</svg>
</div>
</body>
</html>
